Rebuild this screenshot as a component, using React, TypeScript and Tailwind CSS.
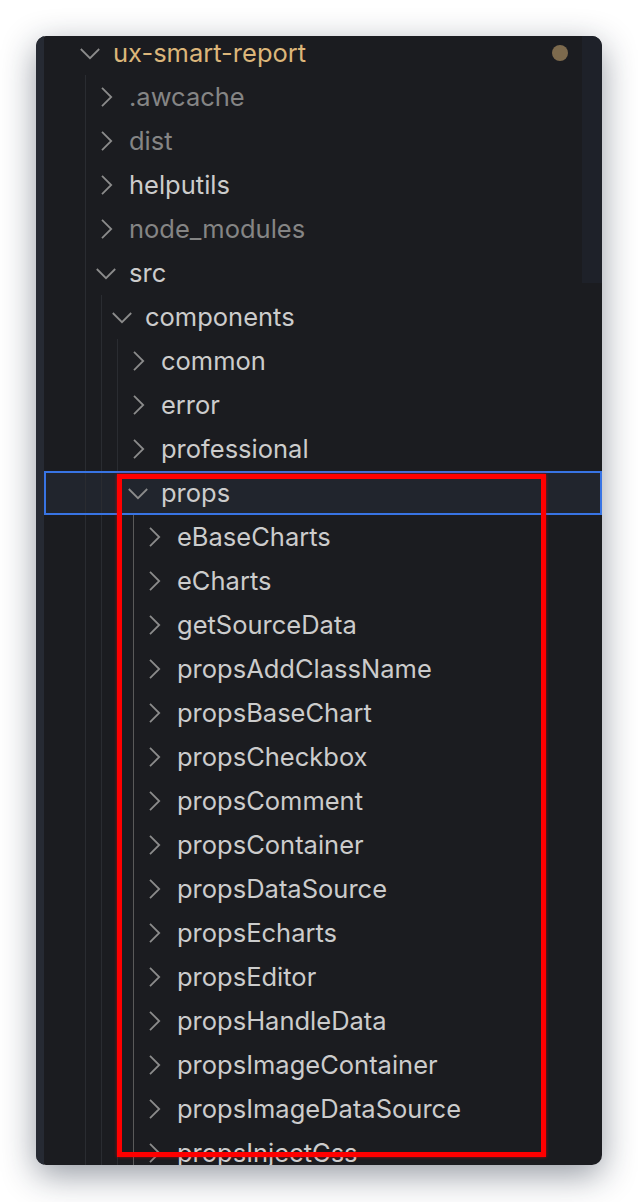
import React from 'react';

type Node = {
  name: string;
  level: number;
  open?: boolean;
  tone?: 'root' | 'dim' | 'normal';
  selected?: boolean;
};

const rows: Node[] = [
  { name: 'ux-smart-report', level: 0, open: true, tone: 'root' },
  { name: '.awcache', level: 1, tone: 'dim' },
  { name: 'dist', level: 1, tone: 'dim' },
  { name: 'helputils', level: 1 },
  { name: 'node_modules', level: 1, tone: 'dim' },
  { name: 'src', level: 1, open: true },
  { name: 'components', level: 2, open: true },
  { name: 'common', level: 3 },
  { name: 'error', level: 3 },
  { name: 'professional', level: 3 },
  { name: 'props', level: 3, open: true, selected: true },
  { name: 'eBaseCharts', level: 4 },
  { name: 'eCharts', level: 4 },
  { name: 'getSourceData', level: 4 },
  { name: 'propsAddClassName', level: 4 },
  { name: 'propsBaseChart', level: 4 },
  { name: 'propsCheckbox', level: 4 },
  { name: 'propsComment', level: 4 },
  { name: 'propsContainer', level: 4 },
  { name: 'propsDataSource', level: 4 },
  { name: 'propsEcharts', level: 4 },
  { name: 'propsEditor', level: 4 },
  { name: 'propsHandleData', level: 4 },
  { name: 'propsImageContainer', level: 4 },
  { name: 'propsImageDataSource', level: 4 },
  { name: 'propsInjectCss', level: 4 },
];

const Chevron = ({ open }: { open?: boolean }) => (
  <svg width="32" height="32" viewBox="0 0 16 16" fill="none" className="shrink-0">
    {open ? (
      <polyline points="3.4,6 8,10.6 12.6,6" stroke="#8b8b8b" strokeWidth="0.9" />
    ) : (
      <polyline points="6,3.4 10.6,8 6,12.6" stroke="#8b8b8b" strokeWidth="0.9" />
    )}
  </svg>
);

const toneClass = {
  root: 'text-[#dcb67a]',
  dim: 'text-[#858585]',
  normal: 'text-[#cccccc]',
};

const Row = ({ node }: { node: Node }) => {
  const guides = Array.from({ length: node.level }, (_, i) => i);
  return (
    <div
      className={
        'flex items-center h-[44px] pl-[30px] ' +
        (node.selected ? 'bg-[#21252d] outline-2 -outline-offset-2 outline-[#3874e4]' : '')
      }
    >
      {guides.map((i) => (
        <div key={i} className="w-4 h-full shrink-0 flex">
          <div
            className={
              'ml-[11px] w-px h-full ' + (i === 3 ? 'bg-[#5a5a5a]' : 'bg-[#2a2c31]')
            }
          />
        </div>
      ))}
      <Chevron open={node.open} />
      <span className={'ml-[7px] text-[25.5px] leading-none whitespace-nowrap ' + toneClass[node.tone ?? 'normal']}>
        {node.name}
      </span>
      {node.tone === 'root' && (
        <div className="ml-auto mr-[34px] w-4 h-4 rounded-full bg-[#7d6a4d]" />
      )}
    </div>
  );
};

export default function App() {
  return (
    <div className="min-h-[1202px] w-[638px] bg-white p-[36px]" style={{ fontFamily: 'Inter, "Noto Sans", sans-serif' }}>
      <div className="relative w-[566px] h-[1129px] rounded-[10px] overflow-hidden bg-[#1b1c20] flex shadow-[0_10px_34px_rgba(20,30,50,0.45)]">
        <div className="w-2 shrink-0 bg-[#262a33]" />
        <div className="flex-1 -mt-[5px]">
          {rows.map((r) => (
            <Row key={r.name} node={r} />
          ))}
        </div>
        <div className="absolute right-0 top-0 w-[20px] h-[247px] bg-[#1e2129]" />
        <div className="absolute left-[81px] top-[438px] w-[429px] h-[683px] border-[5px] border-[#ff0000] shadow-[0_0_3px_rgba(255,0,0,0.6)]" />
      </div>
    </div>
  );
}
